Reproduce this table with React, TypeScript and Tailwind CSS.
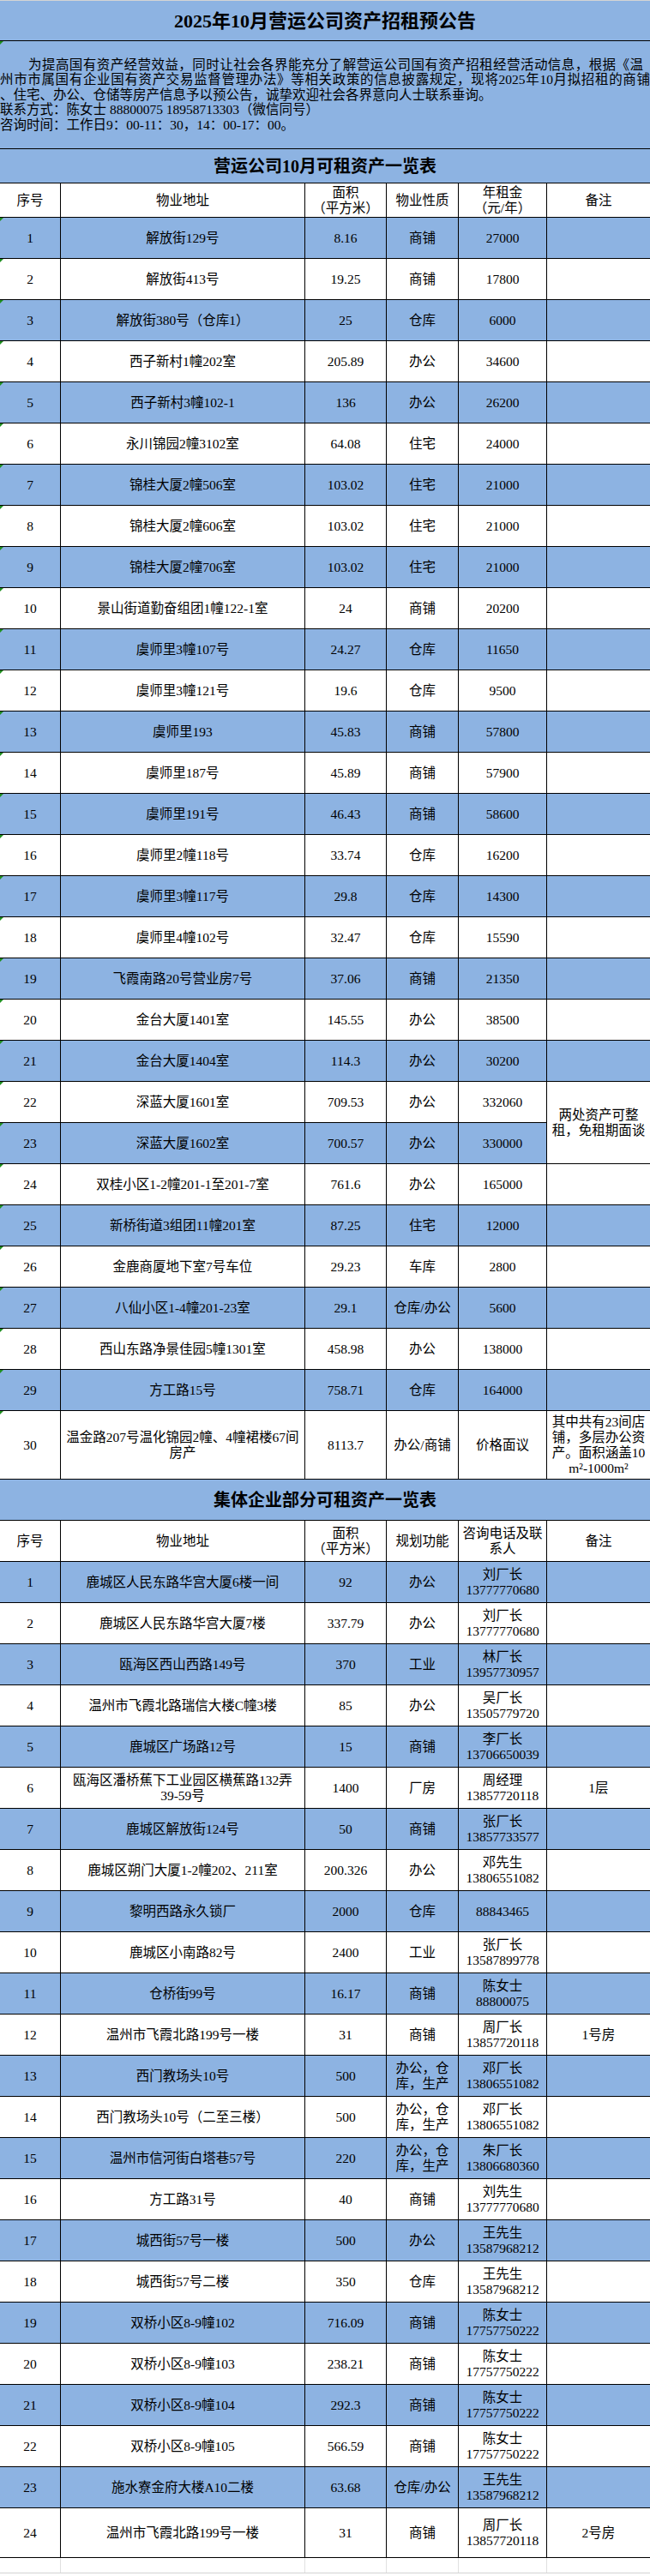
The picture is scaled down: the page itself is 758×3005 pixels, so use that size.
import clsx from "clsx";
import type { ReactNode } from "react";

const GRID = "grid grid-cols-[71px_285px_95px_84px_103px_1fr]";

type Row = [string, string, string, string, string, string?];

const leased: Row[] = [
  ["1", "解放街129号", "8.16", "商铺", "27000"],
  ["2", "解放街413号", "19.25", "商铺", "17800"],
  ["3", "解放街380号（仓库1）", "25", "仓库", "6000"],
  ["4", "西子新村1幢202室", "205.89", "办公", "34600"],
  ["5", "西子新村3幢102-1", "136", "办公", "26200"],
  ["6", "永川锦园2幢3102室", "64.08", "住宅", "24000"],
  ["7", "锦桂大厦2幢506室", "103.02", "住宅", "21000"],
  ["8", "锦桂大厦2幢606室", "103.02", "住宅", "21000"],
  ["9", "锦桂大厦2幢706室", "103.02", "住宅", "21000"],
  ["10", "景山街道勤奋组团1幢122-1室", "24", "商铺", "20200"],
  ["11", "虞师里3幢107号", "24.27", "仓库", "11650"],
  ["12", "虞师里3幢121号", "19.6", "仓库", "9500"],
  ["13", "虞师里193", "45.83", "商铺", "57800"],
  ["14", "虞师里187号", "45.89", "商铺", "57900"],
  ["15", "虞师里191号", "46.43", "商铺", "58600"],
  ["16", "虞师里2幢118号", "33.74", "仓库", "16200"],
  ["17", "虞师里3幢117号", "29.8", "仓库", "14300"],
  ["18", "虞师里4幢102号", "32.47", "仓库", "15590"],
  ["19", "飞霞南路20号营业房7号", "37.06", "商铺", "21350"],
  ["20", "金台大厦1401室", "145.55", "办公", "38500"],
  ["21", "金台大厦1404室", "114.3", "办公", "30200"],
  ["22", "深蓝大厦1601室", "709.53", "办公", "332060", "两处资产可整\n租，免租期面谈"],
  ["23", "深蓝大厦1602室", "700.57", "办公", "330000"],
  ["24", "双桂小区1-2幢201-1至201-7室", "761.6", "办公", "165000"],
  ["25", "新桥街道3组团11幢201室", "87.25", "住宅", "12000"],
  ["26", "金鹿商厦地下室7号车位", "29.23", "车库", "2800"],
  ["27", "八仙小区1-4幢201-23室", "29.1", "仓库/办公", "5600"],
  ["28", "西山东路净景佳园5幢1301室", "458.98", "办公", "138000"],
  ["29", "方工路15号", "758.71", "仓库", "164000"],
  ["30", "温金路207号温化锦园2幢、4幢裙楼67间\n房产", "8113.7", "办公/商铺", "价格面议", "其中共有23间店\n铺，多层办公资\n产。面积涵盖10\nm²-1000m²"],
];

const MIX = "办公，仓\n库，生产";

const collective: Row[] = [
  ["1", "鹿城区人民东路华宫大厦6楼一间", "92", "办公", "刘厂长\n13777770680"],
  ["2", "鹿城区人民东路华宫大厦7楼", "337.79", "办公", "刘厂长\n13777770680"],
  ["3", "瓯海区西山西路149号", "370", "工业", "林厂长\n13957730957"],
  ["4", "温州市飞霞北路瑞信大楼C幢3楼", "85", "办公", "吴厂长\n13505779720"],
  ["5", "鹿城区广场路12号", "15", "商铺", "李厂长\n13706650039"],
  ["6", "瓯海区潘桥蕉下工业园区横蕉路132弄\n39-59号", "1400", "厂房", "周经理\n13857720118", "1层"],
  ["7", "鹿城区解放街124号", "50", "商铺", "张厂长\n13857733577"],
  ["8", "鹿城区朔门大厦1-2幢202、211室", "200.326", "办公", "邓先生\n13806551082"],
  ["9", "黎明西路永久锁厂", "2000", "仓库", "88843465"],
  ["10", "鹿城区小南路82号", "2400", "工业", "张厂长\n13587899778"],
  ["11", "仓桥街99号", "16.17", "商铺", "陈女士\n88800075"],
  ["12", "温州市飞霞北路199号一楼", "31", "商铺", "周厂长\n13857720118", "1号房"],
  ["13", "西门教场头10号", "500", MIX, "邓厂长\n13806551082"],
  ["14", "西门教场头10号（二至三楼）", "500", MIX, "邓厂长\n13806551082"],
  ["15", "温州市信河街白塔巷57号", "220", MIX, "朱厂长\n13806680360"],
  ["16", "方工路31号", "40", "商铺", "刘先生\n13777770680"],
  ["17", "城西街57号一楼", "500", "办公", "王先生\n13587968212"],
  ["18", "城西街57号二楼", "350", "仓库", "王先生\n13587968212"],
  ["19", "双桥小区8-9幢102", "716.09", "商铺", "陈女士\n17757750222"],
  ["20", "双桥小区8-9幢103", "238.21", "商铺", "陈女士\n17757750222"],
  ["21", "双桥小区8-9幢104", "292.3", "商铺", "陈女士\n17757750222"],
  ["22", "双桥小区8-9幢105", "566.59", "商铺", "陈女士\n17757750222"],
  ["23", "施水寮金府大楼A10二楼", "63.68", "仓库/办公", "王先生\n13587968212"],
  ["24", "温州市飞霞北路199号一楼", "31", "商铺", "周厂长\n13857720118", "2号房"],
];

function Cell({
  children,
  blue = false,
  last = false,
  mark = false,
  className = "",
}: {
  children?: ReactNode;
  blue?: boolean;
  last?: boolean;
  mark?: boolean;
  className?: string;
}) {
  return (
    <div
      className={clsx(
        "relative flex items-center justify-center whitespace-pre-line border-b border-black text-center leading-[18px]",
        blue ? "bg-[#8db3e2]" : "bg-white",
        !last && "border-r",
        className
      )}
    >
      {mark && (
        <span className="absolute left-0 top-0 border-t-[4px] border-r-[4px] border-t-[#1f8f1f] border-r-transparent" />
      )}
      {children}
    </div>
  );
}

function Band({ children, h }: { children: ReactNode; h: string }) {
  return (
    <div className={clsx("flex items-center justify-center border-b border-black bg-[#8db3e2] text-[20px] font-bold", h)}>
      {children}
    </div>
  );
}

const App = () => {
  return (
    <div className="w-[758px] bg-white font-['Liberation_Serif','Noto_Sans_CJK_SC',serif] text-[15.5px] text-black">
      <div className="h-px bg-[#d4d4d4]" />

      <div className="flex h-[47px] items-center justify-center border-b border-black bg-[#8db3e2] text-[22px] font-bold">
        2025年10月营运公司资产招租预公告
      </div>

      <div className="relative flex h-[126px] flex-col justify-center border-b border-black bg-[#8db3e2] leading-[17.5px]">
        <span className="absolute left-0 top-0 border-t-[4px] border-r-[4px] border-t-[#1f8f1f] border-r-transparent" />
        <div className="pl-[33px] pr-[8px] [text-align-last:justify]">
          为提高国有资产经营效益，同时让社会各界能充分了解营运公司国有资产招租经营活动信息，根据《温
        </div>
        <div className="[text-align-last:justify]">
          州市市属国有企业国有资产交易监督管理办法》等相关政策的信息披露规定，现将2025年10月拟招租的商铺
        </div>
        <div>、住宅、办公、仓储等房产信息予以预公告，诚挚欢迎社会各界意向人士联系垂询。</div>
        <div>联系方式：陈女士 88800075 18958713303（微信同号）</div>
        <div>咨询时间：工作日9：00-11：30，14：00-17：00。</div>
      </div>

      <Band h="h-[40px]">营运公司10月可租资产一览表</Band>

      <div className={GRID}>
        <Cell className="h-[40px]">序号</Cell>
        <Cell>物业地址</Cell>
        <Cell>{"面积\n（平方米）"}</Cell>
        <Cell>物业性质</Cell>
        <Cell>{"年租金\n（元/年）"}</Cell>
        <Cell last>备注</Cell>

        {leased.map((r) => {
          const n = Number(r[0]);
          const blue = n % 2 === 1;
          const h = n === 30 ? "h-[80px]" : "h-[48px]";
          return [
            <Cell key={`${n}a`} blue={blue} mark className={h}>
              {r[0]}
            </Cell>,
            <Cell key={`${n}b`} blue={blue}>
              {r[1]}
            </Cell>,
            <Cell key={`${n}c`} blue={blue}>
              {r[2]}
            </Cell>,
            <Cell key={`${n}d`} blue={blue}>
              {r[3]}
            </Cell>,
            <Cell key={`${n}e`} blue={blue}>
              {r[4]}
            </Cell>,
            n === 23 ? null : (
              <Cell key={`${n}f`} blue={n === 22 ? false : n === 30 ? false : blue} last className={n === 22 ? "row-span-2" : ""}>
                {r[5]}
              </Cell>
            ),
          ];
        })}
      </div>

      <Band h="h-[48px]">集体企业部分可租资产一览表</Band>

      <div className={GRID}>
        <Cell className="h-[48px]">序号</Cell>
        <Cell>物业地址</Cell>
        <Cell>{"面积\n（平方米）"}</Cell>
        <Cell>规划功能</Cell>
        <Cell>{"咨询电话及联\n系人"}</Cell>
        <Cell last>备注</Cell>

        {collective.map((r) => {
          const n = Number(r[0]);
          const blue = n % 2 === 1;
          const h = n === 24 ? "h-[58px]" : "h-[48px]";
          return [
            <Cell key={`${n}a`} blue={blue} className={h}>
              {r[0]}
            </Cell>,
            <Cell key={`${n}b`} blue={blue}>
              {r[1]}
            </Cell>,
            <Cell key={`${n}c`} blue={blue}>
              {r[2]}
            </Cell>,
            <Cell key={`${n}d`} blue={blue}>
              {r[3]}
            </Cell>,
            <Cell key={`${n}e`} blue={blue}>
              {r[4]}
            </Cell>,
            <Cell key={`${n}f`} blue={blue} last>
              {r[5]}
            </Cell>,
          ];
        })}
      </div>

      <div className={clsx(GRID, "h-[18px] border-b border-[#d4d4d4]")}>
        <div className="border-r border-[#e0e0e0]" />
        <div className="border-r border-[#e0e0e0]" />
        <div className="border-r border-[#e0e0e0]" />
        <div className="border-r border-[#e0e0e0]" />
        <div className="border-r border-[#e0e0e0]" />
        <div />
      </div>
    </div>
  );
};

export default App;
